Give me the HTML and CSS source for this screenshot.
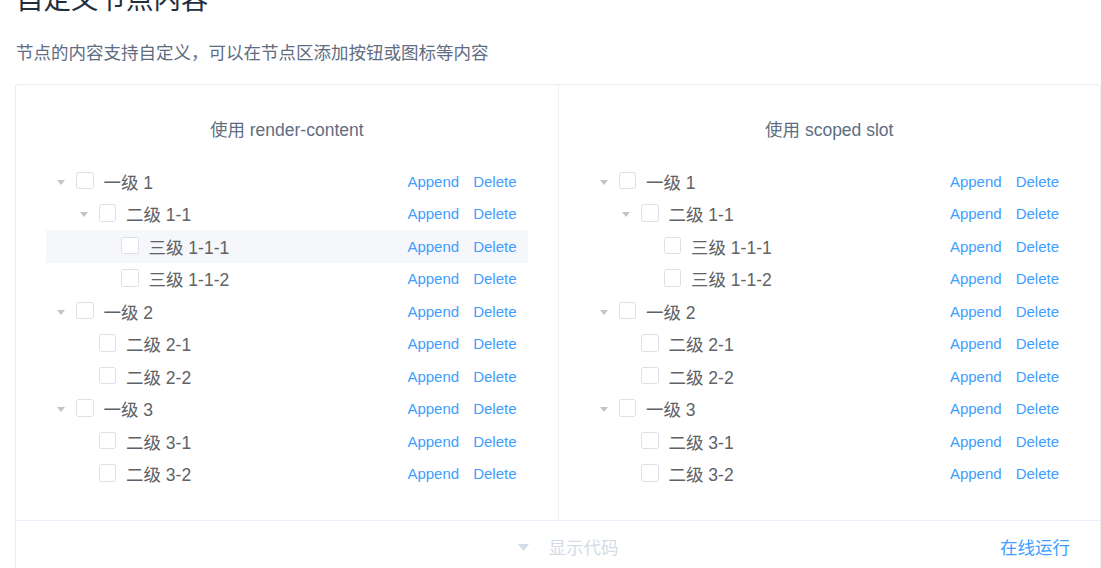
FILE: index.html
```html
<!DOCTYPE html>
<html lang="zh-CN">
<head>
<meta charset="utf-8">
<title>自定义节点内容</title>
<link rel="stylesheet" href="styles.css">
</head>
<body>
<div class="page">
  <h3 class="title">自定义节点内容</h3>
  <p class="desc">节点的内容支持自定义，可以在节点区添加按钮或图标等内容</p>
  <div class="demo">
    <div class="source">
      <div class="col">
        <p class="col-title">使用 render-content</p>
        <div class="tree">
          <div class="row"><span class="caret open"></span><span class="cb"></span><span class="label">一级 1</span><span class="ops"><span class="btn">Append</span><span class="btn">Delete</span></span></div>
          <div class="row l2"><span class="caret open"></span><span class="cb"></span><span class="label">二级 1-1</span><span class="ops"><span class="btn">Append</span><span class="btn">Delete</span></span></div>
          <div class="row l3 hover"><span class="caret"></span><span class="cb"></span><span class="label">三级 1-1-1</span><span class="ops"><span class="btn">Append</span><span class="btn">Delete</span></span></div>
          <div class="row l3"><span class="caret"></span><span class="cb"></span><span class="label">三级 1-1-2</span><span class="ops"><span class="btn">Append</span><span class="btn">Delete</span></span></div>
          <div class="row"><span class="caret open"></span><span class="cb"></span><span class="label">一级 2</span><span class="ops"><span class="btn">Append</span><span class="btn">Delete</span></span></div>
          <div class="row l2"><span class="caret"></span><span class="cb"></span><span class="label">二级 2-1</span><span class="ops"><span class="btn">Append</span><span class="btn">Delete</span></span></div>
          <div class="row l2"><span class="caret"></span><span class="cb"></span><span class="label">二级 2-2</span><span class="ops"><span class="btn">Append</span><span class="btn">Delete</span></span></div>
          <div class="row"><span class="caret open"></span><span class="cb"></span><span class="label">一级 3</span><span class="ops"><span class="btn">Append</span><span class="btn">Delete</span></span></div>
          <div class="row l2"><span class="caret"></span><span class="cb"></span><span class="label">二级 3-1</span><span class="ops"><span class="btn">Append</span><span class="btn">Delete</span></span></div>
          <div class="row l2"><span class="caret"></span><span class="cb"></span><span class="label">二级 3-2</span><span class="ops"><span class="btn">Append</span><span class="btn">Delete</span></span></div>
        </div>
      </div>
      <div class="col">
        <p class="col-title">使用 scoped slot</p>
        <div class="tree">
          <div class="row"><span class="caret open"></span><span class="cb"></span><span class="label">一级 1</span><span class="ops"><span class="btn">Append</span><span class="btn">Delete</span></span></div>
          <div class="row l2"><span class="caret open"></span><span class="cb"></span><span class="label">二级 1-1</span><span class="ops"><span class="btn">Append</span><span class="btn">Delete</span></span></div>
          <div class="row l3"><span class="caret"></span><span class="cb"></span><span class="label">三级 1-1-1</span><span class="ops"><span class="btn">Append</span><span class="btn">Delete</span></span></div>
          <div class="row l3"><span class="caret"></span><span class="cb"></span><span class="label">三级 1-1-2</span><span class="ops"><span class="btn">Append</span><span class="btn">Delete</span></span></div>
          <div class="row"><span class="caret open"></span><span class="cb"></span><span class="label">一级 2</span><span class="ops"><span class="btn">Append</span><span class="btn">Delete</span></span></div>
          <div class="row l2"><span class="caret"></span><span class="cb"></span><span class="label">二级 2-1</span><span class="ops"><span class="btn">Append</span><span class="btn">Delete</span></span></div>
          <div class="row l2"><span class="caret"></span><span class="cb"></span><span class="label">二级 2-2</span><span class="ops"><span class="btn">Append</span><span class="btn">Delete</span></span></div>
          <div class="row"><span class="caret open"></span><span class="cb"></span><span class="label">一级 3</span><span class="ops"><span class="btn">Append</span><span class="btn">Delete</span></span></div>
          <div class="row l2"><span class="caret"></span><span class="cb"></span><span class="label">二级 3-1</span><span class="ops"><span class="btn">Append</span><span class="btn">Delete</span></span></div>
          <div class="row l2"><span class="caret"></span><span class="cb"></span><span class="label">二级 3-2</span><span class="ops"><span class="btn">Append</span><span class="btn">Delete</span></span></div>
        </div>
      </div>
    </div>
    <div class="control">
      <span class="spacer"></span>
      <span class="toggle">
        <svg class="toggle-icon" width="11" height="7" viewBox="0 0 11 7"><path d="M0 0 H11 L5.5 7 Z" fill="#d3dce6"/></svg>
        <span class="toggle-text">显示代码</span>
      </span>
      <span class="run">在线运行</span>
    </div>
  </div>
</div>
</body>
</html>
```
FILE: styles.css
```css
html, body {
  margin: 0;
  padding: 0;
  background: #fff;
  overflow: hidden;
}
body {
  font-family: "Liberation Sans", Arial, "Noto Sans CJK SC", sans-serif;
  color: #5e6d82;
}
.page {
  margin-left: 15px;
}
.title {
  margin: -14px 0 0 1px;
  font-size: 27.5px;
  line-height: 27.5px;
  font-weight: 400;
  color: #1f2f3d;
}
.desc {
  margin: 26.5px 0 18px 1px;
  font-size: 17.5px;
  line-height: 26px;
  color: #5e6d82;
}
.demo {
  width: 1086px;
  box-sizing: border-box;
  border: 1px solid #ebebeb;
  border-radius: 3px;
}
.source {
  display: flex;
}
.col {
  flex: 1;
  min-width: 0;
  padding: 10px 30px 30px;
}
.col:first-child {
  border-right: 1px solid #eff2f6;
}
.col-title {
  margin: 17.5px 0;
  line-height: 35px;
  font-size: 17.5px;
  text-align: center;
  color: #5e6d82;
}
.tree {
  display: flex;
  flex-direction: column;
}
.row {
  display: flex;
  align-items: center;
  height: 32.5px;
  padding-right: 11px;
  font-size: 17.5px;
  color: #606266;
}
.row.l2 { padding-left: 22.5px; }
.row.l3 { padding-left: 45px; }
.row.hover { background: #f5f7fa; }
.caret {
  width: 30px;
  height: 32.5px;
  flex: none;
  display: flex;
  align-items: center;
  justify-content: center;
}
.caret.open::before {
  content: "";
  display: block;
  margin-top: 2px;
  width: 0;
  height: 0;
  border-left: 4.5px solid transparent;
  border-right: 4.5px solid transparent;
  border-top: 5px solid #c0c4cc;
}
.cb {
  flex: none;
  width: 17.5px;
  height: 17.5px;
  box-sizing: border-box;
  border: 1px solid #dcdfe6;
  border-radius: 2.5px;
  background: #fff;
  margin-right: 10px;
  margin-top: -2px;
}
.label {
  flex: 1;
  white-space: nowrap;
}
.ops {
  display: flex;
  gap: 14px;
  font-size: 15px;
  color: #409eff;
}
.btn {
  padding: 0;
}
.control {
  display: grid;
  grid-template-columns: 1fr auto 1fr;
  align-items: center;
  height: 55px;
  box-sizing: border-box;
  padding-bottom: 4px;
  border-top: 1px solid #eaeefb;
  font-size: 17.5px;
}
.toggle {
  display: flex;
  align-items: center;
  gap: 20px;
  padding-left: 20px;
  color: #d3dce6;
}
.toggle-icon {
  display: block;
  margin-top: 2px;
}
.run {
  justify-self: end;
  padding-right: 30px;
  color: #409eff;
}
```
